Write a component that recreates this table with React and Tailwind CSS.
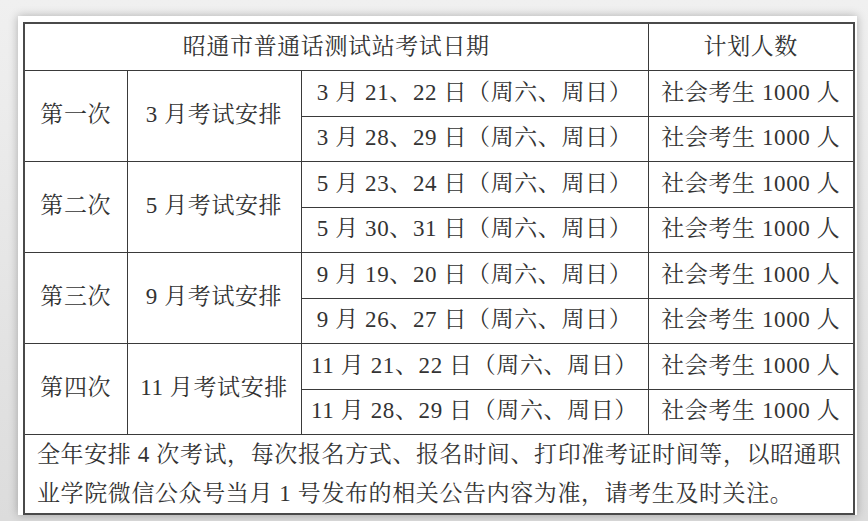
import React from "react";

const sessions = [
  {
    name: "第一次",
    month: "3 月考试安排",
    dates: ["3 月 21、22 日（周六、周日）", "3 月 28、29 日（周六、周日）"],
  },
  {
    name: "第二次",
    month: "5 月考试安排",
    dates: ["5 月 23、24 日（周六、周日）", "5 月 30、31 日（周六、周日）"],
  },
  {
    name: "第三次",
    month: "9 月考试安排",
    dates: ["9 月 19、20 日（周六、周日）", "9 月 26、27 日（周六、周日）"],
  },
  {
    name: "第四次",
    month: "11 月考试安排",
    dates: ["11 月 21、22 日（周六、周日）", "11 月 28、29 日（周六、周日）"],
  },
];

const cell = "border border-[#3a3a3a] text-center align-middle p-0";

export default function App() {
  return (
    <div className="w-[868px] h-[521px] overflow-hidden bg-gradient-to-b from-[#f0f0f0] to-[#dcdcdc] pl-[18px] pt-[16px]">
      <div className="w-[839px] h-[499px] bg-white shadow-[0_0_9px_rgba(0,0,0,0.28)] pl-[5px] pt-[6px]">
        <table className="w-[830px] table-fixed border-collapse border-2 border-[#4a4a4a] text-[23px] tracking-[0.6px] text-[#333] font-['Liberation_Serif','Noto_Serif_CJK_SC','Noto_Sans_CJK_SC',serif]">
          <colgroup>
            <col className="w-[103px]" />
            <col className="w-[174px]" />
            <col className="w-[347px]" />
            <col className="w-[206px]" />
          </colgroup>
          <tbody>
            <tr className="h-[47px]">
              <td colSpan={3} className={cell}>
                昭通市普通话测试站考试日期
              </td>
              <td className={cell}>计划人数</td>
            </tr>
            {sessions.map((s) =>
              s.dates.map((d, i) => (
                <tr key={d} className={i === 0 ? "h-[46px]" : "h-[45px]"}>
                  {i === 0 && (
                    <>
                      <td rowSpan={2} className={cell}>
                        {s.name}
                      </td>
                      <td rowSpan={2} className={cell}>
                        {s.month}
                      </td>
                    </>
                  )}
                  <td className={cell}>{d}</td>
                  <td className={cell}>社会考生 1000 人</td>
                </tr>
              ))
            )}
            <tr className="h-[77px]">
              <td colSpan={4} className="border border-[#3a3a3a] align-middle px-[12px] py-0 leading-[39px]">
                <span className="block whitespace-nowrap text-justify [text-align-last:justify]">
                  全年安排 4 次考试，每次报名方式、报名时间、打印准考证时间等，以昭通职
                </span>
                <span className="block text-left">
                  业学院微信公众号当月 1 号发布的相关公告内容为准，请考生及时关注。
                </span>
              </td>
            </tr>
          </tbody>
        </table>
      </div>
    </div>
  );
}
